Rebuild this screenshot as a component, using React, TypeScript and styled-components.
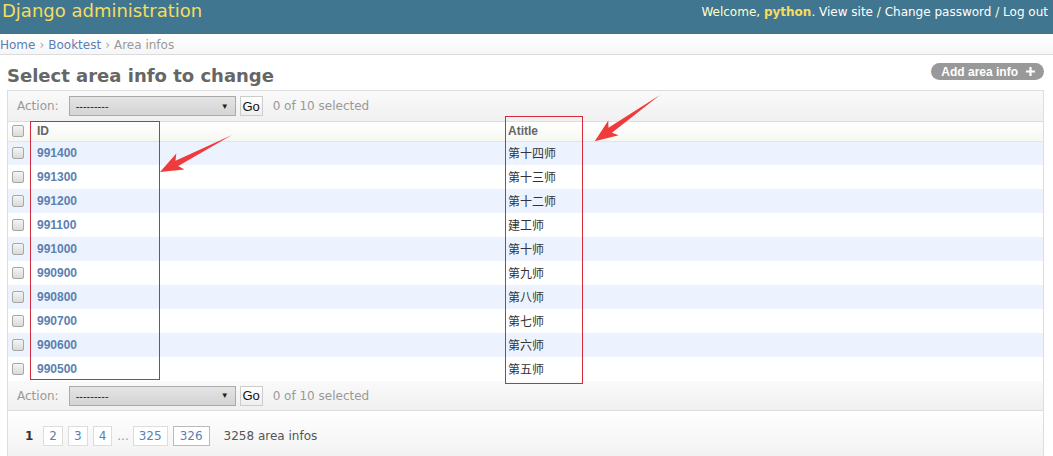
import React from "react";
import styled, { createGlobalStyle } from "styled-components";

const GlobalStyle = createGlobalStyle`
  html, body { margin: 0; padding: 0; background: #fff; }
  body { font-family: "DejaVu Sans", Verdana, sans-serif; font-size: 12px; color: #333; }
  * { box-sizing: border-box; }
`;

const Page = styled.div`
  position: relative;
  width: 1053px;
  height: 456px;
  overflow: hidden;
`;

const Header = styled.div`
  height: 34px;
  background: #417690;
  display: flex;
  align-items: flex-start;
  justify-content: space-between;
  padding: 0 5px 0 2px;
`;

const Branding = styled.div`
  color: #f5dd5d;
  font-size: 18px;
  line-height: 22px;
`;

const UserTools = styled.div`
  color: #ffc;
  font-size: 12px;
  line-height: 14px;
  padding-top: 5px;
  b { color: #f5dd5d; font-weight: bold; }
  span.link { color: #fff; }
`;

const Breadcrumbs = styled.div`
  height: 21px;
  padding: 4px 0 0 0;
  font-size: 12px;
  line-height: 14px;
  color: #999;
  background: linear-gradient(#ffffff, #f6f6f8);
  border-bottom: 1px solid #dcdcdc;
`;

const Crumb = styled.span`
  color: #5b80b2;
`;

const Sep = styled.span`
  color: #aaa;
  padding: 0 4px;
`;

const Content = styled.div`
  padding: 0 9px 0 7px;
`;

const TitleRow = styled.div`
  display: flex;
  justify-content: space-between;
  align-items: flex-start;
  padding-top: 8px;
  height: 32px;
`;

const H1 = styled.h1`
  margin: 2px 0 0 0;
  font-size: 18px;
  line-height: 22px;
  font-weight: bold;
  color: #666;
`;

const AddButton = styled.span`
  display: inline-flex;
  align-items: center;
  height: 17px;
  padding: 0 8px 0 10px;
  border-radius: 9px;
  background: #999;
  color: #fff;
  font-family: "Liberation Sans", Arial, sans-serif;
  font-weight: bold;
  font-size: 12px;
  svg { margin-left: 7px; }
`;

const Changelist = styled.div`
  margin-top: 3px;
  border-left: 1px solid #ddd;
  border-right: 1px solid #ddd;
  border-top: 1px solid #ddd;
`;

const ActionsBar = styled.div<{ $h: number }>`
  height: ${(p) => p.$h}px;
  display: flex;
  align-items: center;
  padding-left: 9px;
  background: linear-gradient(#fafafa, #f0f0f0);
  border-bottom: 1px solid #ddd;
  color: #999;
  font-size: 12px;
`;

const Label = styled.span`
  margin-right: 10px;
`;

const FakeSelect = styled.span`
  display: inline-flex;
  align-items: center;
  justify-content: space-between;
  width: 167px;
  height: 20px;
  padding: 0 4px 0 6px;
  border: 1px solid #aaa;
  background: linear-gradient(#e4e4e4, #d4d4d4);
  color: #222;
  font-family: "Liberation Sans", Arial, sans-serif;
  font-size: 11px;
`;

const Caret = styled.span`
  font-size: 8px;
  color: #222;
  margin-right: 2px;
`;

const GoButton = styled.span`
  display: inline-flex;
  align-items: center;
  justify-content: center;
  margin-left: 4px;
  width: 23px;
  height: 20px;
  border: 1px solid #ccc;
  background: linear-gradient(#fff, #eee);
  color: #111;
  font-family: "Liberation Sans", Arial, sans-serif;
  font-size: 13px;
`;

const Counter = styled.span`
  margin-left: 10px;
  color: #999;
`;

const Table = styled.table`
  width: 100%;
  border-collapse: collapse;
  table-layout: fixed;
`;

const Th = styled.th<{ $pad: number }>`
  height: 19px;
  padding: 0 0 0 ${(p) => p.$pad}px;
  text-align: left;
  font-family: "Liberation Sans", Arial, sans-serif;
  font-size: 12px;
  font-weight: bold;
  color: #666;
  background: linear-gradient(#ffffff, #f7f7f2);
  border-bottom: 1px solid #e4e4e4;
`;

const Tr = styled.tr<{ $alt: boolean }>`
  background: ${(p) => (p.$alt ? "#edf3fe" : "#ffffff")};
`;

const Td = styled.td<{ $pad: number }>`
  height: 24px;
  padding: 0 0 0 ${(p) => p.$pad}px;
  vertical-align: middle;
`;

const IdLink = styled.span`
  font-family: "Liberation Sans", Arial, sans-serif;
  font-weight: bold;
  font-size: 12px;
  color: #5b80b2;
`;

const Title = styled.span`
  display: block;
  font-family: "Noto Sans CJK SC", "DejaVu Sans", sans-serif;
  font-size: 12px;
  line-height: 13px;
  padding-bottom: 1px;
  color: #333;
`;

const Check = styled.span`
  display: block;
  width: 12px;
  height: 12px;
  margin-left: 4px;
  border: 1px solid #a8a8a8;
  border-radius: 2px;
  background: linear-gradient(#f4f4f4, #dadada);
`;

const Paginator = styled.div`
  height: 46px;
  display: flex;
  align-items: center;
  padding: 4px 0 0 17px;
  background: linear-gradient(#ffffff, #f2f2f2);
  font-size: 12px;
  color: #666;
`;

const ThisPage = styled.span`
  font-weight: bold;
  color: #333;
  margin-right: 10px;
`;

const PageLink = styled.span<{ $end?: boolean }>`
  display: inline-flex;
  align-items: center;
  height: 20px;
  padding: 0 ${(p) => (p.$end ? 6 : 5)}px;
  margin-right: 5px;
  border: 1px solid ${(p) => (p.$end ? "#bbb" : "#ddd")};
  background: #fff;
  color: #5b80b2;
`;

const Dots = styled.span`
  color: #999;
  margin-right: 4px;
`;

const Total = styled.span`
  margin-left: 9px;
  color: #555;
`;

const Overlay = styled.svg`
  position: absolute;
  left: 0;
  top: 0;
  pointer-events: none;
`;

const rows: [string, string][] = [
  ["991400", "第十四师"],
  ["991300", "第十三师"],
  ["991200", "第十二师"],
  ["991100", "建工师"],
  ["991000", "第十师"],
  ["990900", "第九师"],
  ["990800", "第八师"],
  ["990700", "第七师"],
  ["990600", "第六师"],
  ["990500", "第五师"],
];

function Arrow({ x, y, angle, len }: { x: number; y: number; angle: number; len: number }) {
  const L = len;
  const pts = [
    [0, 0],
    [L - 19, -3],
    [L - 23, -9],
    [L, 0],
    [L - 23, 9],
    [L - 19, 3],
  ]
    .map((p) => p.join(","))
    .join(" ");
  return <polygon points={pts} fill="#ef3b3b" transform={`translate(${x},${y}) rotate(${angle})`} />;
}

function Actions({ h }: { h: number }) {
  return (
    <ActionsBar $h={h}>
      <Label>Action:</Label>
      <FakeSelect>
        <span>---------</span>
        <Caret>▼</Caret>
      </FakeSelect>
      <GoButton>Go</GoButton>
      <Counter>0 of 10 selected</Counter>
    </ActionsBar>
  );
}

export default function App() {
  return (
    <Page>
      <GlobalStyle />
      <Header>
        <Branding>Django administration</Branding>
        <UserTools>
          Welcome, <b>python</b>. <span className="link">View site</span> / <span className="link">Change password</span> /{" "}
          <span className="link">Log out</span>
        </UserTools>
      </Header>
      <Breadcrumbs>
        <Crumb>Home</Crumb>
        <Sep>›</Sep>
        <Crumb>Booktest</Crumb>
        <Sep>›</Sep>
        Area infos
      </Breadcrumbs>
      <Content>
        <TitleRow>
          <H1>Select area info to change</H1>
          <AddButton>
            Add area info
            <svg width="11" height="11" viewBox="0 0 11 11">
              <path d="M5.5 1v9M1 5.5h9" stroke="#fff" strokeWidth="2.2" />
            </svg>
          </AddButton>
        </TitleRow>
        <Changelist>
          <Actions h={31} />
          <Table>
            <colgroup>
              <col style={{ width: 22 }} />
              <col style={{ width: 473 }} />
              <col />
            </colgroup>
            <thead>
              <tr>
                <Th $pad={0}>
                  <Check />
                </Th>
                <Th $pad={7}>ID</Th>
                <Th $pad={5}>Atitle</Th>
              </tr>
            </thead>
            <tbody>
              {rows.map(([id, t], i) => (
                <Tr key={id} $alt={i % 2 === 0}>
                  <Td $pad={0}>
                    <Check />
                  </Td>
                  <Td $pad={7}>
                    <IdLink>{id}</IdLink>
                  </Td>
                  <Td $pad={5}>
                    <Title>{t}</Title>
                  </Td>
                </Tr>
              ))}
            </tbody>
          </Table>
          <Actions h={30} />
          <Paginator>
            <ThisPage>1</ThisPage>
            <PageLink>2</PageLink>
            <PageLink>3</PageLink>
            <PageLink>4</PageLink>
            <Dots>...</Dots>
            <PageLink>325</PageLink>
            <PageLink $end>326</PageLink>
            <Total>3258 area infos</Total>
          </Paginator>
        </Changelist>
      </Content>
      <Overlay width="1053" height="456" viewBox="0 0 1053 456">
        <rect x="30.5" y="121.5" width="129" height="258" fill="none" stroke="#d42a3c" strokeWidth="1" />
        <rect x="505.5" y="116.5" width="77" height="267" fill="none" stroke="#d42a3c" strokeWidth="1" />
        <Arrow x={232} y={135} angle={152.8} len={81} />
        <Arrow x={660} y={95} angle={144.7} len={80} />
      </Overlay>
    </Page>
  );
}
